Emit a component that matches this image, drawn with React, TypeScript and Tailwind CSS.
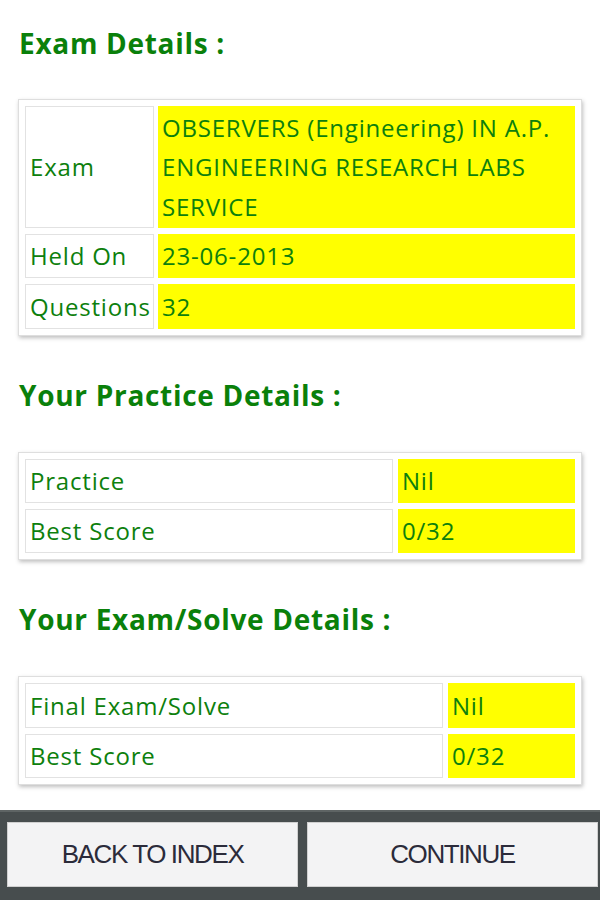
import React from "react";

const body = "font-['Open_Sans','Noto_Sans',sans-serif]";

function Box({ children }: { children: React.ReactNode }) {
  return (
    <div className="mx-[18px] border border-[#dedede] bg-white p-[6px] shadow-[1px_2px_4px_rgba(0,0,0,0.25)]">
      {children}
    </div>
  );
}

function Label({ children, h }: { children: React.ReactNode; h: string }) {
  return (
    <div className={`flex items-center border border-[#e2e2e2] bg-white pl-[4px] text-[24px] tracking-[0.8px] text-[#0d800d] ${h}`}>
      {children}
    </div>
  );
}

function Value({ children, h }: { children: React.ReactNode; h: string }) {
  return (
    <div className={`flex items-center bg-[#ffff00] pl-[4px] text-[24px] tracking-[0.8px] text-[#0d800d] ${h}`}>
      {children}
    </div>
  );
}

function Heading({ children, first }: { children: React.ReactNode; first?: boolean }) {
  return (
    <h2
      className={`h-10 pl-[19px] text-[28px] font-bold leading-10 tracking-[0.7px] text-[#0a800a] ${
        first ? "mt-[23px] mb-[36px]" : "mt-[39px] mb-[37px]"
      }`}
    >
      {children}
    </h2>
  );
}

export default function App() {
  return (
    <div className={`flex h-[900px] w-[600px] flex-col bg-white ${body}`}>
      <Heading first>Exam Details :</Heading>
      <Box>
        <div className="grid grid-cols-[129px_1fr] gap-x-[4px] gap-y-[6px]">
          <Label h="h-[122px]">Exam</Label>
          <div className="flex h-[122px] flex-col justify-center bg-[#ffff00] pl-[4px] text-[24px] leading-[39.5px] tracking-[0.8px] text-[#0d800d]">
            <span className="whitespace-nowrap">OBSERVERS (Engineering) IN A.P.</span>
            <span className="whitespace-nowrap">ENGINEERING RESEARCH LABS</span>
            <span className="whitespace-nowrap">SERVICE</span>
          </div>
          <Label h="h-[44px]">Held On</Label>
          <Value h="h-[44px]">23-06-2013</Value>
          <Label h="h-[45px]">Questions</Label>
          <Value h="h-[45px]">32</Value>
        </div>
      </Box>

      <Heading>Your Practice Details :</Heading>
      <Box>
        <div className="grid grid-cols-[368px_1fr] gap-x-[5px] gap-y-[6px]">
          <Label h="h-[44px]">Practice</Label>
          <Value h="h-[44px]">Nil</Value>
          <Label h="h-[44px]">Best Score</Label>
          <Value h="h-[44px]">0/32</Value>
        </div>
      </Box>

      <Heading>Your Exam/Solve Details :</Heading>
      <Box>
        <div className="grid grid-cols-[418px_1fr] gap-x-[5px] gap-y-[6px]">
          <Label h="h-[45px]">Final Exam/Solve</Label>
          <Value h="h-[45px]">Nil</Value>
          <Label h="h-[44px]">Best Score</Label>
          <Value h="h-[44px]">0/32</Value>
        </div>
      </Box>

      <div className="mt-auto flex h-[90px] gap-[9px] border-t-2 border-[#5e6464] bg-[#474d4e] pt-[10px] pb-[13px] pl-[7px] pr-[2px]">
        <button className="flex-1 border border-[#d0d0d0] bg-[#f3f3f4] font-['Liberation_Sans',Arial,sans-serif] text-[26px] tracking-[-1.4px] text-[#2b2b3a]">
          BACK TO INDEX
        </button>
        <button className="flex-1 border border-[#d0d0d0] bg-[#f3f3f4] font-['Liberation_Sans',Arial,sans-serif] text-[26px] tracking-[-1.4px] text-[#2b2b3a]">
          CONTINUE
        </button>
      </div>
    </div>
  );
}
